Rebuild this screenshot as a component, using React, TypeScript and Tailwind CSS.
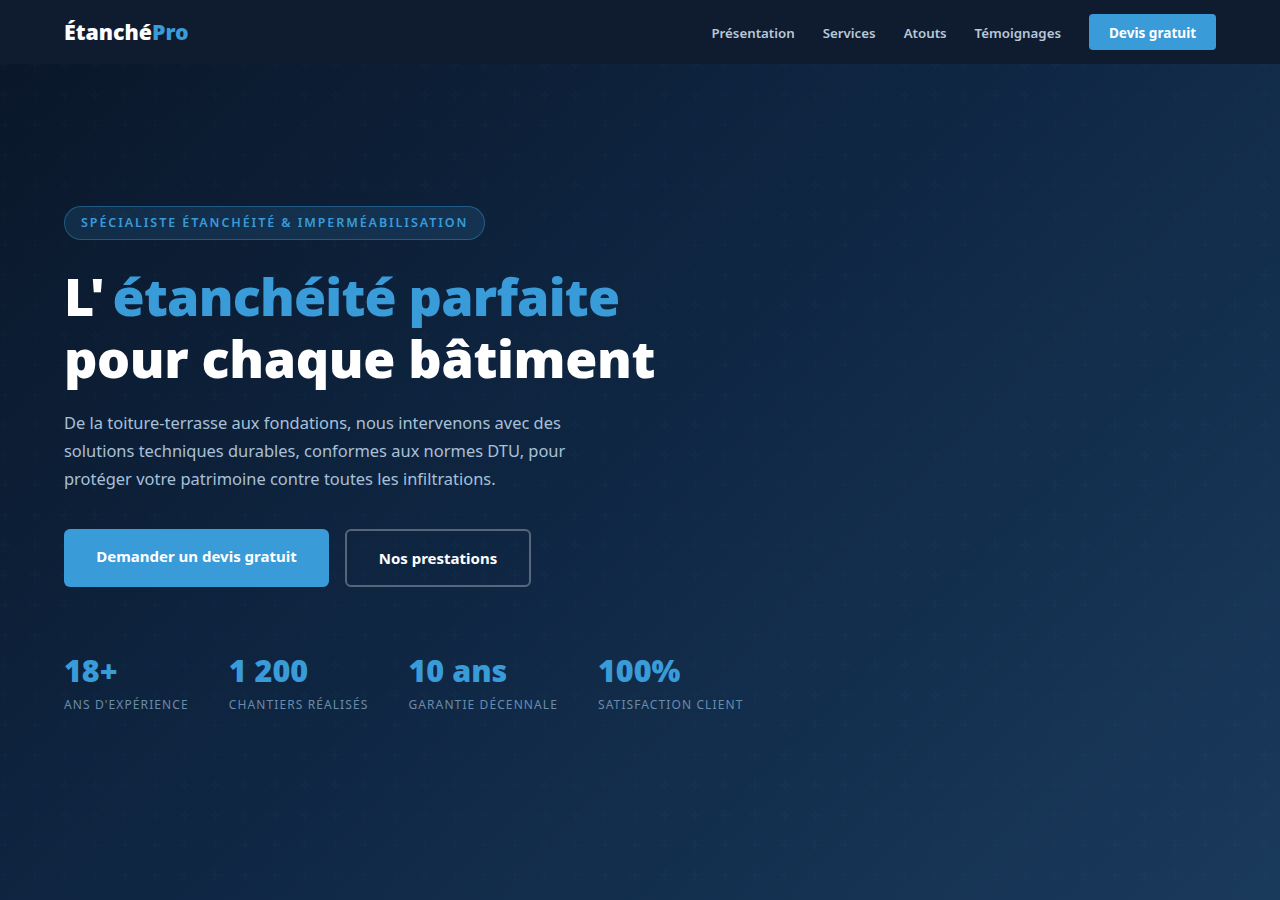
const stats = [["18+","ANS D'EXPÉRIENCE"],["1 200","CHANTIERS RÉALISÉS"],["10 ans","GARANTIE DÉCENNALE"],["100%","SATISFACTION CLIENT"]];
export default function App(){
  return <div className="relative min-h-[900px] overflow-hidden bg-[linear-gradient(135deg,#0a1628_0%,#0f2744_50%,#1a3a5c_100%)] font-['Noto_Sans',sans-serif] text-white">
    <div className="absolute inset-0 bg-[url('data:image/svg+xml,%3Csvg%20width=%2260%22%20height=%2260%22%20viewBox=%220%200%2060%2060%22%20xmlns=%22http://www.w3.org/2000/svg%22%3E%3Cpath%20fill=%22%233a9bd9%22%20fill-opacity=%220.025%22%20d=%22M36%2034v-4h-2v4h-4v2h4v4h2v-4h4v-2h-4zm0-30V0h-2v4h-4v2h4v4h2V6h4V4h-4zM6%2034v-4H4v4H0v2h4v4h2v-4h4v-2H6zM6%204V0H4v4H0v2h4v4h2V6h4V4H6z%22/%3E%3C/svg%3E')]" />
    <nav className="relative flex h-16 items-center justify-between bg-[#0f1c30] px-16">
      <div className="text-[21.3px] font-black leading-none">Étanché<span className="text-[#3a9bd9]">Pro</span></div>
      <div className="flex items-center gap-7 text-[13.3px] font-semibold text-[#b8c8d8]">
        <a className="pt-[3px]">Présentation</a><a className="pt-[3px]">Services</a><a className="pt-[3px]">Atouts</a><a className="pt-[3px]">Témoignages</a>
        <a className="flex h-9 w-[127px] items-center justify-center rounded bg-[#3a9bd9] pt-[2px] text-[13.6px] font-bold text-white">Devis gratuit</a>
      </div>
    </nav>
    <main className="relative px-16 pt-[142px]">
      <div className="inline-flex h-[34px] items-center rounded-full border border-[#3a9bd9]/40 bg-[#3a9bd9]/15 px-4 text-[12.5px] font-semibold tracking-[1.92px] text-[#3a9bd9]">SPÉCIALISTE ÉTANCHÉITÉ &amp; IMPERMÉABILISATION</div>
      <h1 className="mt-[25px] text-[52px] font-black leading-[61.6px] tracking-[-0.35px]">L'<span className="ml-2 tracking-[-0.8px] text-[#3a9bd9]">étanchéité parfaite</span><br/>pour chaque bâtiment</h1>
      <p className="mt-[21px] w-[520px] text-[16.45px] leading-7 text-[#a8c0d8]">De la toiture-terrasse aux fondations, nous intervenons avec des solutions techniques durables, conformes aux normes DTU, pour protéger votre patrimoine contre toutes les infiltrations.</p>
      <div className="mt-9 flex items-start gap-4">
        <a className="h-[58px] w-[265px] rounded-md bg-[#3a9bd9] pt-4 text-center text-[15px] font-bold">Demander un devis gratuit</a>
        <a className="h-[58px] w-[186px] rounded-md border-2 border-white/30 pt-4 text-center text-[15px] font-bold">Nos prestations</a>
      </div>
      <div className="mt-[65px] flex gap-10">
        {stats.map(([a,b])=><div key={a}><div className="text-[30.5px] font-black leading-9 text-[#3a9bd9]">{a}</div><div className="mt-[9px] text-xs tracking-[1.1px] text-[#6a8cab]">{b}</div></div>)}
      </div>
    </main>
  </div>;
}
